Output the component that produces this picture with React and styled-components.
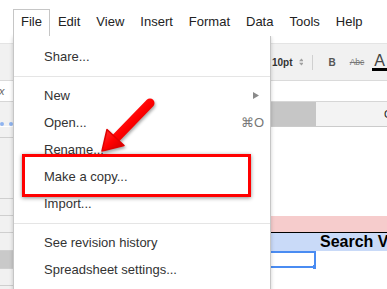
import React from "react"
import styled, { createGlobalStyle } from "styled-components"

const GlobalStyle = createGlobalStyle`
  html, body {
    margin: 0;
    padding: 0;
    background: #fff;
    overflow: hidden;
  }
  body {
    font-family: "Liberation Sans", Arial, sans-serif;
  }
`

const menus = ["File", "Edit", "View", "Insert", "Format", "Data", "Tools", "Help"]

const fileItems = [
  { label: "Share..." },
  { sep: true },
  { label: "New", submenu: true },
  { label: "Open...", shortcut: "⌘O" },
  { label: "Rename..." },
  { label: "Make a copy..." },
  { label: "Import..." },
  { sep: true },
  { label: "See revision history" },
  { label: "Spreadsheet settings..." },
]

// row heights (incl. bottom border) of the grid below the header
const rows = [
  { h: 11 },
  { h: 61 },
  { h: 17 },
  { h: 17, tone: "pink" },
  { h: 18, tone: "blue", text: "Search Volume" },
  { h: 18, selected: true },
  { h: 17 },
  { h: 17 },
]

export default function App() {
  return (
    <>
      <GlobalStyle />
      <Page>
        <MenuBar>
          {menus.map((m, i) => (
            <MenuTab key={m} active={i === 0}>
              {m}
            </MenuTab>
          ))}
        </MenuBar>

        <Toolbar>
          <FontSize>10pt</FontSize>
          <Spinner width="5" height="8" viewBox="0 0 5 8">
            <path d="M0 3.2 L2.5 0.5 L5 3.2 Z M0 4.8 L2.5 7.5 L5 4.8 Z" fill="#a0a0a0" />
          </Spinner>
          <ToolDivider />
          <BoldBtn>B</BoldBtn>
          <StrikeBtn>Abc</StrikeBtn>
          <ColorBtn>A</ColorBtn>
        </Toolbar>

        <FormulaBar>
          <FxLabel>x</FxLabel>
        </FormulaBar>

        <Sheet>
          <Row>
            <Corner />
            <ColHead width={203} />
            <ColHead width={100} selected />
            <ColHead width={144}>C</ColHead>
          </Row>
          {rows.map((r, i) => (
            <Row key={i} style={{ height: r.h }}>
              <RowHead selected={r.selected} />
              <Cell width={203} tone={r.tone} />
              <Cell width={100} tone={r.tone}>
                {r.selected && (
                  <Selection>
                    <Handle />
                  </Selection>
                )}
              </Cell>
              <Cell width={144} tone={r.tone}>
                {r.text && <HeadingText>{r.text}</HeadingText>}
              </Cell>
            </Row>
          ))}
        </Sheet>

        <Dropdown>
          {fileItems.map((it, i) =>
            it.sep ? (
              <Separator key={i} />
            ) : (
              <Item key={i}>
                <span>{it.label}</span>
                {it.shortcut && <Shortcut>{it.shortcut}</Shortcut>}
                {it.submenu && (
                  <SubArrow width="6" height="7" viewBox="0 0 6 7">
                    <path d="M0 0 L6 3.5 L0 7 Z" fill="#8a8a8a" />
                  </SubArrow>
                )}
              </Item>
            )
          )}
        </Dropdown>

        <Highlight />

        <Arrow width="66" height="66" viewBox="0 0 66 66">
          <defs>
            <linearGradient id="red" x1="0" y1="0" x2="1" y2="1">
              <stop offset="0" stopColor="#ff3b3b" />
              <stop offset="0.5" stopColor="#f00" />
              <stop offset="1" stopColor="#c80000" />
            </linearGradient>
          </defs>
          <line x1="55" y1="8" x2="21" y2="43" stroke="url(#red)" strokeWidth="9" strokeLinecap="round" />
          <path d="M7 56 L12 34.5 L29 50.5 Z" fill="url(#red)" stroke="#e00000" strokeWidth="1.5" strokeLinejoin="round" />
        </Arrow>
      </Page>
    </>
  )
}

const Page = styled.div`
  position: relative;
  width: 387px;
  height: 289px;
  overflow: hidden;
  background: #fff;
`

const MenuBar = styled.div`
  display: flex;
  align-items: flex-start;
  height: 43px;
  padding: 9px 0 0 13px;
  box-sizing: border-box;
  background: #fff;
`

const MenuTab = styled.div`
  position: relative;
  z-index: 3;
  height: 27px;
  padding: 0 7px;
  box-sizing: border-box;
  border: 1px solid ${(p) => (p.active ? "#c6c6c6" : "transparent")};
  border-bottom: 0;
  background: #fff;
  font-size: 13px;
  line-height: 24px;
  color: #222;
  white-space: nowrap;
`

const Toolbar = styled.div`
  display: flex;
  align-items: center;
  height: 38px;
  box-sizing: border-box;
  /* the left part of the toolbar sits under the open menu */
  padding-left: 272px;
  background: #f1f1f1;
  border-top: 1px solid #e4e4e4;
  border-bottom: 1px solid #dadada;
  white-space: nowrap;
`

const FontSize = styled.span`
  font-size: 10px;
  font-weight: bold;
  color: #333;
`

const Spinner = styled.svg`
  margin-left: 6px;
  display: block;
`

const ToolDivider = styled.div`
  width: 1px;
  height: 15px;
  margin-left: 9px;
  background: #d0d0d0;
`

const BoldBtn = styled.span`
  margin-left: 15px;
  font-size: 10px;
  font-weight: bold;
  color: #555;
`

const StrikeBtn = styled.span`
  margin-left: 14px;
  font-size: 8.5px;
  color: #777;
  text-decoration: line-through;
`

const ColorBtn = styled.span`
  margin-left: 8px;
  padding: 0 2px;
  font-size: 16px;
  line-height: 14px;
  color: #444;
  border-bottom: 3px solid #000;
`

const FormulaBar = styled.div`
  display: flex;
  align-items: center;
  height: 21px;
  box-sizing: border-box;
  border-bottom: 1px solid #d6d6d6;
  background: #fff;
`

const FxLabel = styled.span`
  font-size: 11px;
  color: #666;
  font-style: italic;
  margin-left: -1px;
`

const Sheet = styled.div`
  display: flex;
  flex-direction: column;
`

const Row = styled.div`
  display: flex;
  height: 25px;
  box-sizing: border-box;
`

const Corner = styled.div`
  width: 13px;
  flex: none;
  background: #f1f1f1;
  border-bottom: 4px dotted #8fb4f0;
  box-sizing: border-box;
  height: 24px;
`

const ColHead = styled.div`
  width: ${(p) => p.width}px;
  flex: none;
  box-sizing: border-box;
  background: ${(p) => (p.selected ? "#c6c6c6" : "#f3f3f3")};
  border-bottom: 1px solid #cbcbcb;
  font-size: 11px;
  line-height: 24px;
  text-align: center;
  color: #222;
`

const RowHead = styled.div`
  width: 13px;
  flex: none;
  box-sizing: border-box;
  background: ${(p) => (p.selected ? "#c9c9c9" : "#f1f1f1")};
  border-bottom: 1px solid #cfcfcf;
`

const tones = {
  pink: "#f6cccc",
  blue: "#c9daf8",
}

const Cell = styled.div`
  position: relative;
  width: ${(p) => p.width}px;
  flex: none;
  box-sizing: border-box;
  background: ${(p) => tones[p.tone] || "#fff"};
  border-bottom: 1px solid ${(p) => (p.tone === "pink" ? "#000" : "transparent")};
  white-space: nowrap;
`

const HeadingText = styled.span`
  display: block;
  padding-left: 4px;
  font-size: 16px;
  font-weight: bold;
  line-height: 17px;
  color: #000;
`

const Selection = styled.div`
  position: absolute;
  top: 0;
  left: 0;
  right: 0;
  bottom: 0;
  border: 2px solid #4a8cf2;
`

const Handle = styled.div`
  position: absolute;
  right: -5px;
  bottom: -5px;
  width: 6px;
  height: 6px;
  background: #4a8cf2;
`

const Dropdown = styled.div`
  position: absolute;
  z-index: 2;
  left: 13px;
  top: 35px;
  width: 258px;
  box-sizing: border-box;
  padding: 7px 0 30px;
  background: #fff;
  border: 1px solid #c6c6c6;
  box-shadow: 0 2px 4px rgba(0, 0, 0, 0.2);
`

const Item = styled.div`
  display: flex;
  align-items: center;
  justify-content: space-between;
  height: 27px;
  padding: 0 6px 0 30px;
  font-size: 13px;
  line-height: 27px;
  color: #333;
  white-space: nowrap;
`

const Shortcut = styled.span`
  color: #777;
  font-size: 13px;
`

const SubArrow = styled.svg`
  display: block;
  margin-right: 5px;
`

const Separator = styled.div`
  height: 1px;
  margin: 6px 0 5px;
  background: #e5e5e5;
`

const Highlight = styled.div`
  position: absolute;
  z-index: 4;
  left: 22px;
  top: 154px;
  width: 229px;
  height: 43px;
  box-sizing: border-box;
  border: 3px solid #f00;
  box-shadow: 0 1px 4px rgba(0, 0, 0, 0.45);
`

const Arrow = styled.svg`
  position: absolute;
  z-index: 5;
  left: 95px;
  top: 95px;
  overflow: visible;
  filter: drop-shadow(1px 2px 1.5px rgba(0, 0, 0, 0.35));
`
